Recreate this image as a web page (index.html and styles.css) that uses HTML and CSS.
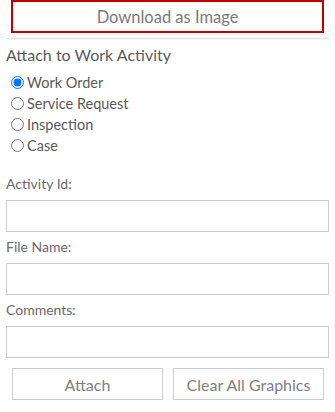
FILE: index.html
```html
<!DOCTYPE html>
<html lang="en">
<head>
    <meta charset="UTF-8">
    <meta name="viewport" content="width=device-width, initial-scale=1.0">
    <title>Attach to Work Activity</title>
    <link rel="stylesheet" href="styles.css">
</head>
<body>
    <div class="panel">
        <button class="download-btn" type="button">Download as Image</button>
        <hr class="divider">

        <div class="section-title">Attach to Work Activity</div>

        <div class="radio-group">
            <label class="radio-row"><input type="radio" name="activityType" value="workorder" checked><span>Work Order</span></label>
            <label class="radio-row"><input type="radio" name="activityType" value="request"><span>Service Request</span></label>
            <label class="radio-row"><input type="radio" name="activityType" value="inspection"><span>Inspection</span></label>
            <label class="radio-row"><input type="radio" name="activityType" value="case"><span>Case</span></label>
        </div>

        <div class="form-group">
            <label for="activityId">Activity Id:</label>
            <input type="text" id="activityId" name="activityId">
        </div>

        <div class="form-group">
            <label for="fileName">File Name:</label>
            <input type="text" id="fileName" name="fileName">
        </div>

        <div class="form-group">
            <label for="comments">Comments:</label>
            <input type="text" id="comments" name="comments">
        </div>

        <div class="actions">
            <button type="button">Attach</button>
            <button type="button">Clear All Graphics</button>
        </div>
    </div>
</body>
</html>
```

FILE: styles.css
```css
body {
    margin: 0;
    font-family: Lato, "Open Sans", sans-serif;
    color: #5a5a5a;
    background: #fff;
}
.panel {
    width: 323px;
    padding: 0 6px;
}
.download-btn {
    display: block;
    width: 313px;
    height: 33px;
    margin: 0 0 0 5px;
    border: 2px solid #c00000;
    background: #fff;
    color: #7a7a7a;
    font-family: inherit;
    font-size: 16.5px;
    cursor: pointer;
}
.divider {
    border: none;
    border-top: 1px solid #e0e0e0;
    margin: 5px 0 0;
}
.section-title {
    font-size: 16px;
    line-height: 20px;
    margin-top: 6px;
}
.radio-group {
    margin-top: 7px;
    margin-bottom: 19px;
}
.radio-row {
    display: flex;
    align-items: center;
    height: 21px;
    font-size: 14.5px;
}
.radio-row input {
    width: 13px;
    height: 13px;
    margin: 0 3px 0 5px;
}
.form-group {
    margin-top: 6px;
}
.form-group label {
    display: block;
    font-size: 14px;
    line-height: 18px;
    margin-bottom: 7px;
    color: #6a6a6a;
}
.form-group input {
    display: block;
    width: 100%;
    height: 32px;
    border: 1px solid #ccc;
    border-radius: 0;
    box-sizing: border-box;
    padding: 4px 6px;
    font-family: inherit;
    font-size: 14px;
}
.actions {
    display: flex;
    gap: 10px;
    margin: 10px 5px 0 6px;
}
.actions button {
    flex: 1;
    height: 32px;
    background: #fff;
    border: 1px solid #ccc;
    color: #808080;
    font-family: inherit;
    font-size: 16px;
    cursor: pointer;
}
```
